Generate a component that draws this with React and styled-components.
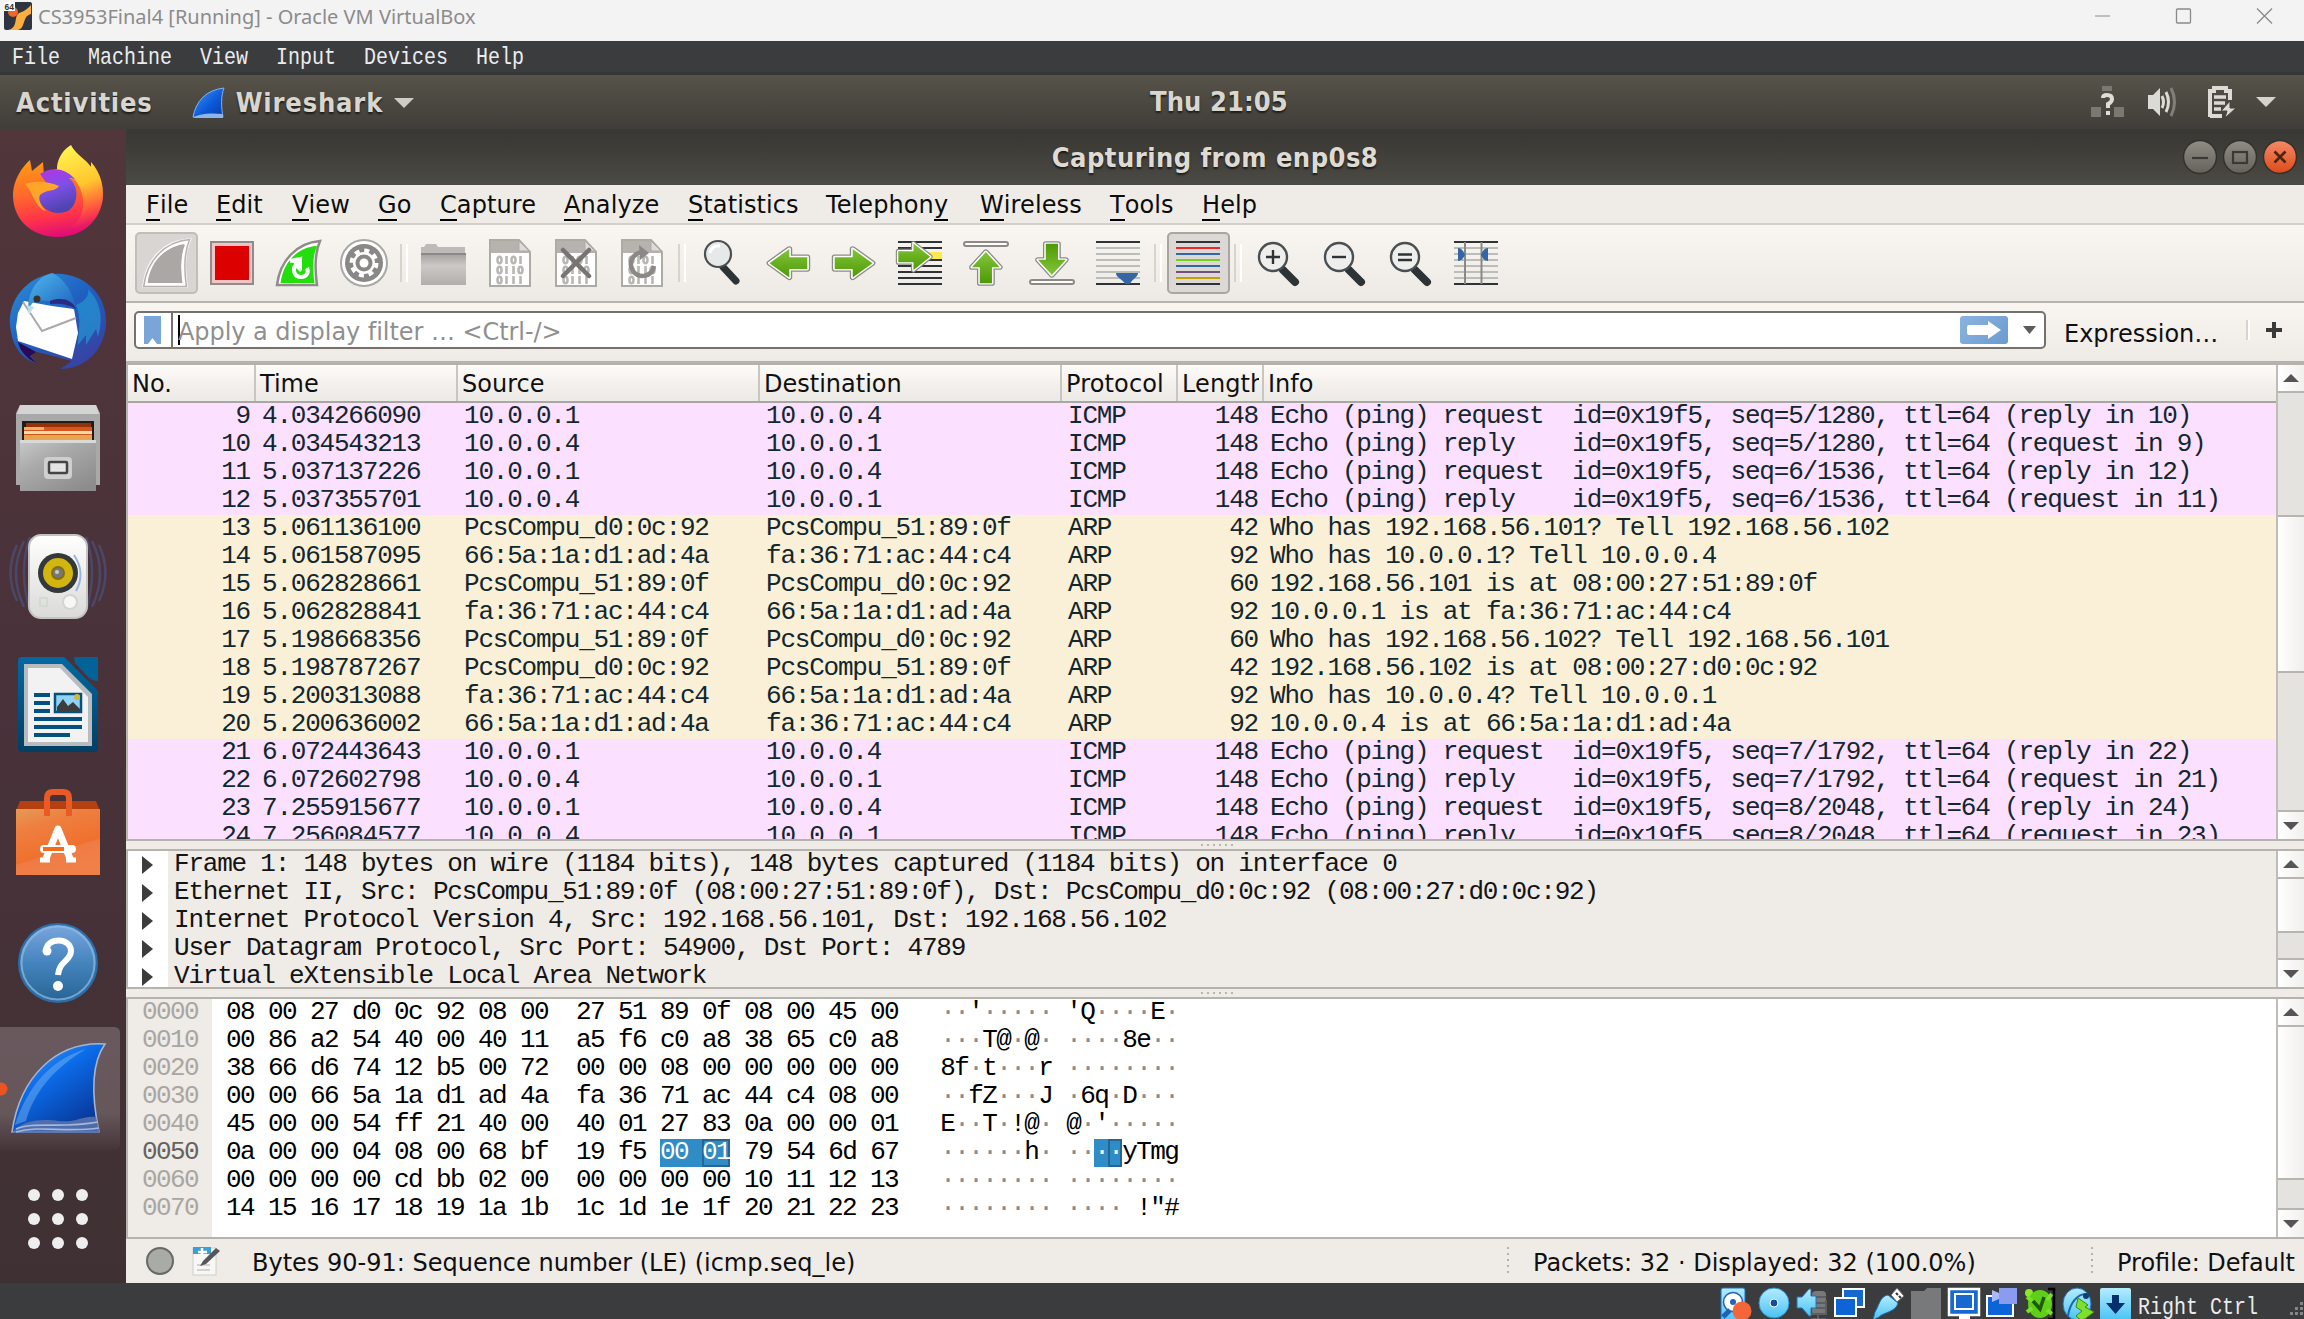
import React from 'react';
import styled, { createGlobalStyle, css } from 'styled-components';

const ui = '"DejaVu Sans", sans-serif';
const uiBold = '"DejaVu Sans Condensed", "DejaVu Sans", sans-serif';
const mono = '"Liberation Mono", monospace';

const Global = createGlobalStyle`
  * { box-sizing: border-box; }
  body { margin: 0; overflow: hidden; background: #3b3c3e; }
  svg { display: block; flex: none; overflow: visible; }
`;

/* ---------- host window ---------- */
const Host = styled.div`
  width: 2304px; height: 1319px; overflow: hidden;
  display: flex; flex-direction: column; font-family: ${ui};
`;
const HostTitle = styled.div`
  height: 41px; background: #f3f3f3; display: flex; align-items: center; padding: 0 32px 0 4px;
  font: 20px/30px "Noto Sans", sans-serif; color: #8b8b8b;
`;
const HostName = styled.span`flex: 1; margin: -7px 0 0 6px; white-space: pre;`;
const HostButtons = styled.div`display: flex; gap: 66px; margin-top: -9px;`;
const HostMenu = styled.div`
  height: 34px; background: #3b3c3e; border-bottom: 3px solid #353637;
  display: flex; gap: 28px; padding: 3px 0 0 12px; align-items: center;
`;
const Serif = styled.span`
  font: 20px/24px "Liberation Mono", monospace; color: #ececec; white-space: pre;
  transform: scaleY(1.22);
`;
const HostStatus = styled.div`
  height: 36px; flex: none; background: #3b3c3e; display: flex; justify-content: flex-end;
  align-items: flex-start; gap: 6px; padding: 5px 0 0;
`;
const KeyLabel = styled(Serif)`margin: 8px 26px 0 0;`;

/* ---------- guest desktop ---------- */
const TopBar = styled.div`
  height: 54px; flex: none; background: linear-gradient(#57534a, #403e39);
  display: grid; grid-template-columns: 1150px 1fr auto; align-items: center;
  font: bold 27px/34px ${uiBold}; color: #d9d6cf; letter-spacing: 0.85px;
  text-shadow: 0 2px 2px rgba(0,0,0,.6); padding-right: 28px;
`;
const TopLeft = styled.div`display: flex; align-items: center; padding: 1px 0 0 16px;`;
const AppMenu = styled.div`display: flex; align-items: center; gap: 11px; margin-left: 39px;`;
const Clock = styled.div`letter-spacing: 0.1px; margin-top: -1px;`;
const Tray = styled.div`display: flex; align-items: center;`;
const TrayItem = styled.div`margin-left: ${p => p.$gap}px;`;
const Desktop = styled.div`height: 1154px; flex: none; display: flex; min-height: 0;`;
const Dock = styled.div`
  width: 126px; background: linear-gradient(#51363a, #4a323b 45%, #3f3133);
  display: flex; flex-direction: column; overflow: hidden;
`;
const DockCell = styled.div`height: 128px; flex: none;`;

/* ---------- application window ---------- */
const Win = styled.div`flex: 1; min-width: 0; display: flex; flex-direction: column; background: #efebe7;`;
const WinTitle = styled.div`
  height: 56px; flex: none; background: linear-gradient(#3a3834, #3c3b36 25%, #4c4a44);
  display: grid; grid-template-columns: 1fr auto 1fr; align-items: center;
  font: bold 27px/34px ${uiBold}; letter-spacing: 0.48px; color: #dfdbd2; text-shadow: 0 2px 2px rgba(0,0,0,.6);
`;
const WinTitleText = styled.span`grid-column: 2; margin-top: 1px;`;
const WinButtons = styled.div`display: flex; gap: 6px; justify-content: flex-end; padding-right: 7px;`;
const MenuBar = styled.div`
  height: 40px; flex: none; border-bottom: 2px solid #d3cfca; background: #efece7;
  display: flex; padding-left: 18px; font: 24px/40px ${ui}; color: #0c0c0c;
`;
const MenuItem = styled.span`width: ${p => p.$w}px; white-space: pre; padding-left: 2px; letter-spacing: 0.1px;`;
const Mn = styled.span`border-bottom: 2px solid #000; padding-bottom: 0; display: inline-block; line-height: 28px;`;
const ToolBar = styled.div`
  height: 78px; flex: none; display: flex; align-items: center; padding-left: 7px;
  background: linear-gradient(#f9f6f2, #edeae5); border-bottom: 2px solid #b6b2ad;
`;
const ToolButton = styled.div`width: 66px; height: 62px; display: flex; align-items: center; justify-content: center;`;
const Pressed = styled.div`
  width: 63px; height: 62px; display: flex; align-items: center; justify-content: center;
  background: ${p => p.$strong ? '#dcd8d5' : '#d9d5d2'}; border: 2px solid ${p => p.$strong ? '#aaa5a1' : '#c1bdb9'}; border-radius: 5px;
`;
const ToolSep = styled.div`width: 14px; height: 38px; display: flex; justify-content: center;
  &::before { content: ''; width: 4px; border-left: 2px solid #d7d3ce; border-right: 2px solid #fff; }`;
const FilterBar = styled.div`
  height: 62px; flex: none; display: flex; align-items: center; padding: 0 20px 4px 8px;
  background: linear-gradient(#f9f5f1, #eeeae6); border-bottom: 4px solid #b5b1ac; font: 24px/30px ${ui}; color: #101010;
`;
const FilterInput = styled.div`
  width: 1912px; height: 38px; border: 2px solid #76716d; border-radius: 5px; background: #fff;
  display: flex; align-items: center; padding-right: 8px; color: #8f8f8f;
`;
const Bookmark = styled.div`width: 37px; height: 34px; border-right: 2px solid #76716d; padding: 3px 0 0 8px;`;
const Caret = styled.div`width: 2px; height: 30px; background: #000; margin-left: 5px;`;
const Placeholder = styled.span`flex: 1; white-space: pre; letter-spacing: -0.05px; margin: 4px 0 0 -2px;`;
const Apply = styled.div`width: 48px; height: 28px; border-radius: 3px; background: linear-gradient(135deg, #8bb3e0, #6c9bd0); margin-right: 15px;
  display: flex; align-items: center; justify-content: center;`;
const ExprLabel = styled.span`margin: 7px 0 0 18px; width: 182px;`;
const ExprSep = styled.div`width: 4px; height: 20px; border-left: 2px solid #d7d3ce; border-right: 2px solid #fff; margin-right: 16px;`;

/* ---------- panes ---------- */
const Pane = styled.div`
  display: flex; height: ${p => p.$h}px; flex: none; overflow: hidden;
  border-left: 2px solid #b8b4b0; border-bottom: 2px solid #b6b2ae; ${p => p.$top && css`border-top: 2px solid #b6b2ae;`}
`;
const PaneBody = styled.div`flex: 1; min-width: 0; overflow: hidden; background: ${p => p.$bg || '#fff'};`;
const Splitter = styled.div`height: 8px; flex: none; background: #efebe7; display: flex; justify-content: center; gap: 4px; padding: 3px 0 0 4px;`;
const SplitDot = styled.div`width: 2px; height: 2px; background: #b9b5b0;`;

const cols = '128px 202px 302px 302px 116px 86px 1fr';
const Header = styled.div`
  display: grid; grid-template-columns: ${cols}; height: 38px; border-bottom: 2px solid #aaa6a2;
  background: linear-gradient(#fdfbf9, #f4f1ed 50%, #eceae6); font: 24px/39px ${ui}; color: #101010;
`;
const HeadCell = styled.div`border-right: 2px solid #c9c5c1; padding-left: 4px; overflow: hidden; white-space: nowrap; height: 36px; letter-spacing: ${p => p.$ls || 0}px;
  &:last-child { border-right: 0; }`;
const HeadClip = styled.div`overflow: hidden; width: 77px; letter-spacing: 0.1px;`;
const monoText = css`font: 26px/26px ${mono}; letter-spacing: -1.21px; white-space: pre;`;
const Row = styled.div`
  display: grid; grid-template-columns: ${cols}; height: 28px;
  background: ${p => p.$arp ? '#faf0d7' : '#fce0ff'}; color: #12272e; ${monoText}
`;
const Cell = styled.div`padding: 0 ${p => p.$right ? 6 : 5}px 0 ${p => p.$right ? 0 : 6}px; text-align: ${p => p.$right ? 'right' : 'left'};`;

const TreeRow = styled.div`display: flex; height: 28px; color: #141414; ${monoText} letter-spacing: -1.22px;`;
const TreeGutter = styled.div`width: 40px; background: #fff; display: flex; align-items: center; padding-left: 14px;`;
const TreeText = styled.span`padding-left: 6px;`;

const HexPane = styled.div`display: flex; height: 238px;`;
const Offsets = styled.div`width: 84px; background: #efebe7; padding-left: 14px; ${monoText} letter-spacing: -1.6px; color: #a9a6a2;`;
const Offset = styled.div`height: 28px; color: ${p => p.$on ? '#66635f' : 'inherit'};`;
const HexLines = styled.div`padding-left: 14px; color: #000; ${monoText} letter-spacing: -1.6px;`;
const HexLine = styled.div`height: 28px;`;
const Sel = styled.span`background: #308cc6; color: #fff; display: inline-block; height: 28px;`;
const SelCur = styled(Sel)`box-shadow: inset 0 0 0 2px #246691;`;
const Dot = styled.span`color: #8c8c8c;`;

/* ---------- scroll bars ---------- */
const Scroll = styled.div`width: 28px; border-left: 2px solid #c0bcb8; display: flex; flex-direction: column; background: #e4e3df;`;
const ScrollArrow = styled.div`
  height: ${p => p.$down ? 29 : 28}px; flex: none; background: linear-gradient(90deg, #fff, #f1f0ed); display: flex; align-items: center; justify-content: center;
  ${p => p.$down ? css`border-top: 2px solid #b8b5b1;` : css`border-bottom: 2px solid #b8b5b1;`}
`;
const Track = styled.div`height: ${p => p.$h}px; flex: none;`;
const Thumb = styled.div`height: ${p => p.$h}px; flex: none; background: linear-gradient(90deg, #fff, #f0efec); border-bottom: 2px solid #b8b5b1; ${p => p.$t && css`border-top: 2px solid #b8b5b1;`}`;

const Status = styled.div`height: 44px; flex: none; display: flex; align-items: center; padding-left: 20px; font: 24px/30px ${ui}; color: #101010; background: #efebe7;`;
const StatusText = styled.span`width: ${p => p.$w}px; margin: 3px 0 0 ${p => p.$ml}px; white-space: nowrap;`;
const StatusSep = styled.div`width: 2px; height: 28px; background: repeating-linear-gradient(#b5b1ac 0 2px, transparent 2px 6px);`;

/* ---------- drawings ---------- */
const Tri = ({ dir = 'down', w = 16, h = 8, c = '#555' }) => (
  <svg width={w} height={h} viewBox="0 0 10 10" preserveAspectRatio="none">
    <path fill={c} d={dir === 'down' ? 'M0 0H10L5 10Z' : dir === 'up' ? 'M0 10H10L5 0Z' : 'M0 0L10 5L0 10Z'} />
  </svg>
);
const FinMini = () => (
  <svg width="33" height="32" viewBox="0 0 33 32">
    <defs><linearGradient id="fm" x2="1" y2="1"><stop offset="0" stopColor="#3b97ff" /><stop offset=".6" stopColor="#0b56d6" /><stop offset="1" stopColor="#0a3ba6" /></linearGradient></defs>
    <path d="M1 30C4 14 14 3 32 1C29 8 29 20 31 30Z" fill="url(#fm)" stroke="#7fb4f0" strokeWidth="1" />
    <path d="M1 31C8 26 20 26 31 27V31Z" fill="#8db4ec" />
  </svg>
);

const dockIcons = {
  firefox: <>
    <defs>
      <linearGradient id="ff1" x1=".3" y1="0" x2=".5" y2="1"><stop offset="0" stopColor="#ff9a12" /><stop offset=".4" stopColor="#ff6a2c" /><stop offset=".72" stopColor="#ff3647" /><stop offset="1" stopColor="#e00b78" /></linearGradient>
      <linearGradient id="ff2" x1=".3" y1="0" x2=".5" y2="1"><stop offset="0" stopColor="#fff44f" /><stop offset=".5" stopColor="#ffc62e" /><stop offset="1" stopColor="#ff7139" stopOpacity="0" /></linearGradient>
      <linearGradient id="ff3" x2=".3" y2="1"><stop offset="0" stopColor="#b833e1" /><stop offset=".5" stopColor="#7f4fe8" /><stop offset="1" stopColor="#5044b0" /></linearGradient>
    </defs>
    <path d="M30 31L32 42L43 33L44 46C52 40 62 38 76 38C86 34 92 36 96 42C100 46 103 54 103 68C101 92 82 108 58 108C31 108 12 90 13 64C14 50 22 38 30 31Z" fill="url(#ff1)" />
    <path d="M71 16C76 26 86 30 91 38L91 33C101 44 105 60 102 74C98 92 84 100 70 98C90 88 84 60 74 50C64 50 56 46 57 38C58 28 64 20 71 16Z" fill="url(#ff2)" />
    <path d="M40 45C50 38 64 38 75 50L69 49C80 58 78 76 68 82C56 87 42 82 39 70C38 64 42 58 48 56Z" fill="url(#ff3)" />
    <path d="M25 55C36 51 50 53 59 57C56 63 46 60 40 66C38 70 40 76 46 82C34 78 34 64 25 55Z" fill="#ffa62a" />
  </>,
  thunderbird: <>
    <defs>
      <linearGradient id="tb1" x2=".8" y2="1"><stop offset="0" stopColor="#2d8fd8" /><stop offset=".5" stopColor="#1f5fc0" /><stop offset="1" stopColor="#3a3fa0" /></linearGradient>
      <linearGradient id="tb2" x2="1" y2="1"><stop offset="0" stopColor="#4fb8ee" /><stop offset="1" stopColor="#1c5fbb" /></linearGradient>
    </defs>
    <path d="M52 17C26 20 8 44 10 68C12 90 22 102 36 106L26 92L72 104C66 108 62 111 60 112C86 112 106 92 106 64C106 34 80 14 52 17Z" fill="url(#tb1)" />
    <path d="M18 56L24 44L52 49L74 52L78 76L72 102L18 84L16 70Z" fill="#fff" />
    <path d="M23 45L42 74L76 61" fill="none" stroke="#a9a9a9" strokeWidth="2" />
    <path d="M18 85L36 95L30 99L36 106C26 101 20 94 18 85Z" fill="#2b0a55" />
    <path d="M52 16C36 20 28 36 28 52L34 44C50 42 66 46 76 54C74 34 62 20 52 16Z" fill="url(#tb2)" />
    <path d="M50 44C60 40 72 42 76 52C70 48 60 46 50 47Z" fill="#2a2a80" />
    <path d="M76 48C82 60 78 76 78 88L86 78L86 88L96 72L98 80C104 60 100 44 88 32C90 40 82 46 76 48Z" fill="#2596d2" opacity=".7" />
    <circle cx="37" cy="42" r="3.5" fill="#3d3324" /><path d="M27 48L34 50L29 58Z" fill="#b9e2ee" />
  </>,
  files: <>
    <defs><linearGradient id="fl" x2=".8" y2="1"><stop offset="0" stopColor="#c9c9c9" /><stop offset=".4" stopColor="#aaa" /><stop offset="1" stopColor="#8c8c8c" /></linearGradient></defs>
    <path d="M20 20H96L100 28V100H16V28Z" fill="#a9a9a9" /><path d="M20 20H96L99 29H17Z" fill="#d4d4d4" />
    <rect x="22" y="36" width="72" height="20" fill="#1f1c19" /><rect x="26" y="38" width="65" height="5" fill="#94330a" />
    <rect x="24" y="42" width="68" height="14" fill="#d8571d" /><rect x="24" y="42" width="20" height="3" fill="#eeb070" /><rect x="24" y="46" width="68" height="3" fill="#f9dda8" /><rect x="24" y="50" width="68" height="6" fill="#e9a550" />
    <path d="M20 55H96V106H20Z" fill="url(#fl)" /><rect x="20" y="55" width="76" height="3" fill="#d9d9d9" />
    <rect x="44" y="72" width="28" height="22" rx="4" fill="#cfcfcf" /><rect x="49" y="77" width="18" height="11" rx="1" fill="#e4e4e4" stroke="#444" strokeWidth="2.5" />
  </>,
  rhythmbox: <>
    <defs><linearGradient id="rb" x2="0" y2="1"><stop offset="0" stopColor="#fff" /><stop offset="1" stopColor="#dadad8" /></linearGradient></defs>
    <g fill="none" stroke="#4b5d94" strokeWidth="2.5" opacity=".5"><path d="M24 28Q8 60 24 94M17 32Q4 60 17 88M30 24Q18 58 30 98M92 28Q108 60 92 94M99 32Q112 60 99 88M86 24Q98 58 86 98" /></g>
    <rect x="29" y="22" width="58" height="83" rx="12" fill="url(#rb)" stroke="#c3c3bf" strokeWidth="2" />
    <circle cx="58" cy="60" r="20" fill="#33383a" /><circle cx="58" cy="60" r="15" fill="#d2b50e" /><circle cx="58" cy="60" r="7" fill="#836f0d" /><circle cx="58" cy="60" r="5" fill="#777" /><circle cx="57" cy="59" r="2" fill="#ccc" />
    <circle cx="70" cy="89" r="7" fill="#f7f7f5" stroke="#d4d4d0" strokeWidth="2" /><rect x="40" y="85" width="7" height="8" fill="none" stroke="#d3dacf" strokeWidth="2" />
    <path d="M74 42Q86 60 76 78" fill="none" stroke="#98b6dd" strokeWidth="2" />
  </>,
  writer: <>
    <defs><linearGradient id="wr" x2="0" y2="1"><stop offset="0" stopColor="#0369a3" /><stop offset="1" stopColor="#023f63" /></linearGradient></defs>
    <path d="M22 16H64L98 50V107Q98 111 94 111H22Q18 111 18 107V20Q18 16 22 16Z" fill="url(#wr)" />
    <path d="M74 16H98V40Q92 40 88 36L75 22Z" fill="#036297" />
    <path d="M24 23H62L92 53V105H24Z" fill="#b9bcbe" /><path d="M28 27H60L88 56V101H28Z" fill="#f2f2f2" />
    <path d="M34 54H50M34 62H50M34 70H50M34 78H82M34 86H82M34 94H70" stroke="#02517e" strokeWidth="4" />
    <rect x="55" y="53" width="26" height="18" fill="#8fd3f7" stroke="#02517e" strokeWidth="2.5" /><path d="M57 70V66L63 58L68 65L73 61L80 68V70Z" fill="#3d3d3d" /><circle cx="77" cy="56" r="3" fill="#d1b640" />
  </>,
  software: <>
    <defs><linearGradient id="sw" x2=".4" y2="1"><stop offset="0" stopColor="#e59a56" /><stop offset=".3" stopColor="#ee7f40" /><stop offset=".72" stopColor="#f0702e" /><stop offset=".74" stopColor="#ef7b43" /><stop offset="1" stopColor="#f08048" /></linearGradient></defs>
    <path d="M20 32H96L100 42H16Z" fill="#b5400f" /><rect x="16" y="40" width="84" height="66" fill="url(#sw)" />
    <path d="M47 47V29Q47 23 53 23H63Q69 23 69 29V47" fill="none" stroke="#ea5a24" strokeWidth="6" />
    <path d="M45 92L58 60L71 92" fill="none" stroke="#fff" strokeWidth="7" strokeLinejoin="round" />
    <path d="M40 91H50M66 91H76" stroke="#fff" strokeWidth="5" />
    <rect x="40" y="76" width="36" height="8" rx="4" fill="#fff" /><rect x="43" y="78" width="21" height="4" fill="#f56b17" />
  </>,
  help: <>
    <defs><linearGradient id="hp" x2="0" y2="1"><stop offset="0" stopColor="#7ba6de" /><stop offset=".5" stopColor="#4484bd" /><stop offset="1" stopColor="#276494" /></linearGradient></defs>
    <circle cx="58" cy="66" r="39" fill="url(#hp)" stroke="#2d6ca5" strokeWidth="2" /><circle cx="58" cy="66" r="36.5" fill="none" stroke="#8fbce6" strokeWidth="2" opacity=".7" />
    <path d="M46 54C46 40 71 40 71 54C71 64 59 64 58 78" fill="none" stroke="#fff" strokeWidth="6" /><circle cx="47" cy="54" r="4.5" fill="#fff" /><circle cx="58" cy="89" r="5" fill="#fff" />
  </>,
  wireshark: <>
    <defs>
      <linearGradient id="ws" x1=".1" x2=".8" y2="1"><stop offset="0" stopColor="#3f9bff" /><stop offset=".4" stopColor="#0b6be8" /><stop offset="1" stopColor="#07318f" /></linearGradient>
      <linearGradient id="wb" x2="0" y2="1"><stop offset="0" stopColor="#69595e" /><stop offset=".7" stopColor="#66575b" /><stop offset="1" stopColor="#463538" /></linearGradient>
    </defs>
    <path d="M0 2H114Q120 2 120 8V119Q120 125 114 125H0Z" fill="url(#wb)" />
    <circle cx="1" cy="64" r="6.5" fill="#e95420" />
    <path d="M12 107C20 52 56 16 105 19C93 36 90 64 99 107Z" fill="url(#ws)" stroke="#a8b4cc" strokeWidth="1.6" />
    <path d="M15 100C28 60 52 34 86 24C56 42 34 66 26 96Z" fill="#7db8f7" opacity=".45" />
    <path d="M12 108C22 94 44 94 58 96C76 98 84 90 96 92L100 108Z" fill="#5672ae" opacity=".9" /><path d="M16 104C34 96 60 104 98 97M16 107C40 100 66 108 99 103" fill="none" stroke="#a5b8d8" strokeWidth="1.6" />
  </>,
  apps: <g fill="#eee">{[42, 66, 90].map(y => [34, 58, 82].map(x => <circle key={x + '-' + y} cx={x} cy={y} r="6" />))}</g>,
};

const finD = 'M3 46C6 22 22 4 46 2C40 16 41 32 43 46Z';
const Doc = ({ children }) => <>
  <path d="M4 1H33L44 13V47H4Z" fill="#fff" stroke="#aeaba7" strokeWidth="2" /><path d="M5 2H33V12H43V14H5Z" fill="#b6b3af" /><path d="M33 2V12H43Z" fill="#dedbd8" stroke="#aeaba7" />
  <g fill="none" stroke="#b9b7b4" strokeWidth="2.6">
    <ellipse cx="13.500" cy="21" rx="2" ry="3.200" /><path d="M20.500 17V25M34.500 17V25" /><ellipse cx="27.500" cy="21" rx="2" ry="3.200" />
    <ellipse cx="13.500" cy="31" rx="2" ry="3.200" /><path d="M20.500 27V35M27.500 27V35" /><ellipse cx="34.500" cy="31" rx="2" ry="3.200" />
    <ellipse cx="13.500" cy="41" rx="2" ry="3.200" /><path d="M20.500 37V45M27.500 37V45M34.500 37V45" />
  </g>
  {children}
</>;
const arrowR = 'M3 17H23V7L45 24L23 41V31H3Z';
const Lens = ({ children }) => <>
  <path d="M29 31L41 43" stroke="#2e3436" strokeWidth="8" strokeLinecap="round" /><circle cx="19" cy="18" r="14" fill="#eeeeec" stroke="#4a5052" strokeWidth="2.4" />
  <g stroke="#2e3436" strokeWidth="2.4">{children}</g>
</>;
const Lines = ({ colors, x1 = 2, x2 = 46 }) => colors.map((c, i) => <path key={i} d={`M${x1} ${3 + i * 6}H${x2}`} stroke={c} strokeWidth="2.2" />);
const G = 'url(#grn)';
const Outlined = ({ d, t }) => <g transform={t} strokeLinejoin="round"><path d={d} fill="#fff" stroke="#8c8a87" strokeWidth="6.5" /><path d={d} fill="#fff" stroke="#fff" strokeWidth="3.500" /><path d={d} fill={G} /></g>;
const up = 'M17 44V24H8L24 5L40 24H31V44Z';

const toolIcons = {
  start: <><path d={finD} fill="#aaa7a4" stroke="#fff" strokeWidth="5" /><path d={finD} fill="none" stroke="#b5b1ae" strokeWidth="1.4" transform="translate(-1.6 -1.6) scale(1.07)" /><path d={finD} fill="#aaa7a4" transform="translate(3 4) scale(.87)" /></>,
  stop: <><rect x="3" y="3" width="42" height="42" fill="#f4c3c5" stroke="#8f8c8a" strokeWidth="2" /><rect x="7" y="7" width="34" height="34" fill="#dd0000" /></>,
  restart: <><path d={finD} fill="#fff" stroke="#8f8c8a" strokeWidth="2.5" /><path d={finD} fill="#24dd0c" transform="translate(4 5) scale(.85)" /><path d="M16 22L26 20L25 29L22 26C18 30 20 38 27 38C33 38 35 33 33 29" fill="none" stroke="#fff" strokeWidth="4" /><path d="M15 20H28V32Z" fill="#fff" /></>,
  options: <><circle cx="24" cy="24" r="23" fill="#fff" stroke="#aaa8a5" strokeWidth="2" /><circle cx="24" cy="24" r="19" fill="#8a8886" /><circle cx="24" cy="24" r="11" fill="#fff" /><circle cx="24" cy="24" r="12.5" fill="none" stroke="#fff" strokeWidth="4" strokeDasharray="5 4.8" /><circle cx="24" cy="24" r="8.500" fill="#8a8886" /><circle cx="24" cy="24" r="4.5" fill="#fff" /></>,
  open: <><path d="M1 12V8H4L6 5H16L18 8H45V46H1Z" fill="#bdbab7" /><path d="M1 14H46V46H1Z" fill="url(#fold)" /><path d="M1 15H46" stroke="#8b8885" strokeWidth="2" /></>,
  save: <Doc />,
  close: <Doc><path d="M11 11L37 37M37 11L11 37" stroke="#777472" strokeWidth="4.5" strokeLinecap="round" /></Doc>,
  reload: <Doc><path d="M24 13C14 15 10 24 15 32C21 40 34 38 36 27" fill="none" stroke="#8b8886" strokeWidth="4.5" /><path d="M21 6L31 14L22 21Z" fill="#8b8886" /></Doc>,
  find: <g transform="translate(2 0)"><path d="M23 28L36 42" stroke="#2e3436" strokeWidth="7" strokeLinecap="round" /><circle cx="18" cy="15" r="13" fill="#e7e9e8" stroke="#4a5052" strokeWidth="2.2" /><path d="M10 14C11 9 15 6 20 7" fill="none" stroke="#fff" strokeWidth="3" /></g>,
  back: <Outlined d={arrowR} t="translate(46 4) scale(-.9 .84)" />,
  forward: <Outlined d={arrowR} t="translate(2 4) scale(.9 .84)" />,
  goto: <><Lines colors={['#2e3436', '#2e3436', '#2e3436', '#2e3436', '#2e3436', '#2e3436', '#2e3436', '#2e3436']} /><rect x="32" y="13" width="14" height="7" fill="#fce94f" /><Outlined d={arrowR} t="translate(0 -1) scale(.76 .78)" /></>,
  first: <><rect x="2" y="3" width="44" height="4" rx="2" fill="#fff" stroke="#8c8a87" strokeWidth="2" /><Outlined d={up} t="translate(3 9) scale(.87 .8)" /></>,
  last: <><rect x="2" y="41" width="44" height="4" rx="2" fill="#fff" stroke="#8c8a87" strokeWidth="2" /><Outlined d={up} t="translate(3 40) scale(.87 -.8)" /></>,
  autoscroll: <><Lines colors={['#2e3436', '#bbbdb9', '#bbbdb9', '#bbbdb9', '#bbbdb9', '#bbbdb9', '#bbbdb9', '#2e3436']} /><path d="M22 34H44C44 38 38 40 36 45H31C29 40 22 39 22 34Z" fill="#3465a4" /></>,
  color: <Lines colors={['#2e3436', '#ef2929', '#3465a4', '#73d216', '#3465a4', '#75507b', '#c4a000', '#2e3436']} />,
  zin: <Lens><path d="M12 18H26M19 11V25" /></Lens>,
  zout: <Lens><path d="M12 18H26" /></Lens>,
  zone: <Lens><path d="M12 15.5H26M12 21H26" /></Lens>,
  columns: <><Lines colors={['#2e3436', '#bbbdb9', '#bbbdb9', '#bbbdb9', '#bbbdb9', '#bbbdb9', '#bbbdb9', '#2e3436']} /><path d="M13 3V45M29.500 3V45" stroke="#888a85" strokeWidth="2" /><path d="M6 9C10 9 12 13 13 16C12 18 10 22 6 22ZM36 9C32 9 30 13 29 16C30 18 32 22 36 22Z" fill="#3465a4" /></>,
};

const tools = [
  { i: 'start', pressed: 1 }, { i: 'stop' }, { i: 'restart' }, { i: 'options' }, null,
  { i: 'open' }, { i: 'save' }, { i: 'close' }, { i: 'reload' }, null,
  { i: 'find' }, { i: 'back' }, { i: 'forward' }, { i: 'goto' }, { i: 'first' }, { i: 'last' }, { i: 'autoscroll' }, null,
  { i: 'color', pressed: 2 }, null, { i: 'zin' }, { i: 'zout' }, { i: 'zone' }, { i: 'columns' },
];
const ToolIcon = ({ name }) => <svg width="48" height="48" viewBox="0 0 48 48">{toolIcons[name]}</svg>;

const trayBlue = 'url(#vb)';
const hostIcons = [
  <><rect x="1" y="0" width="24" height="34" rx="2" fill={trayBlue} stroke="#1d6fc0" /><circle cx="13" cy="14" r="9.500" fill="#fff" stroke="#1e62b5" strokeWidth="1.500" /><circle cx="13" cy="14" r="3" fill="#2065b8" /><path d="M3 29L10 22" stroke="#1e62b5" strokeWidth="5" /><circle cx="22" cy="23" r="9.500" fill="#f4663a" /></>,
  <><circle cx="16" cy="15" r="15" fill={trayBlue} stroke="#2a8fd0" /><circle cx="16" cy="15" r="4" fill="#10509c" stroke="#fff" /></>,
  <><rect x="16" y="3" width="14" height="24" rx="4" fill="#77797b" /><path d="M14 14V26H30V12M22 26V31M15 31H30M20 9H30M20 15H30M20 20H30" stroke="#5c5e60" strokeWidth="2" fill="none" /><path d="M1 9H6L13 1H15V8H20V20H15V28H13L6 20H1Z" fill={trayBlue} stroke="#2372b5" /></>,
  <><rect x="9" y="1" width="21" height="18" fill="#1468cf" stroke="#fff" strokeWidth="2" /><rect x="1" y="10" width="21" height="18" fill="#0d64d6" stroke="#fff" strokeWidth="2" /></>,
  <><path d="M19 7L25 0L32 8L25 14Z" fill="#fff" stroke="#666" /><path d="M16 7L26 15C24 24 12 24 7 29L1 32L3 24C7 18 8 8 16 7Z" fill={trayBlue} stroke="#1d6fb5" /><path d="M24 5L26 7M27 8L29 10" stroke="#333" strokeWidth="2" /></>,
  <path d="M1 3H14L17 0H31V32H1Z" fill="#77797a" />,
  <><rect x="1" y="1" width="30" height="26" fill="#1769cf" stroke="#fff" strokeWidth="2.500" /><rect x="7" y="6" width="18" height="15" fill="#1769cf" stroke="#fff" strokeWidth="2" /><path d="M11 29H22" stroke="#fff" strokeWidth="4" /></>,
  <><rect x="1" y="8" width="26" height="20" fill="#0d64d6" stroke="#fff" strokeWidth="2" /><rect x="13" y="0" width="18" height="16" fill="#8b9cf0" /><path d="M6 2L13 5V11L6 14Z" fill="#a9b8ff" /></>,
  <><circle cx="5" cy="5" r="4" fill="#8be82d" /><ellipse cx="16" cy="16" rx="12" ry="14" fill="#5fd017" /><path d="M3 9L8 13M3 24L8 20M28 6L23 12M28 26L23 22" stroke="#7ae02a" strokeWidth="4" /><path d="M9 13L16 21L20 9" fill="none" stroke="#1e5a0a" strokeWidth="3.500" /><path d="M24 1H30V31H24" fill="none" stroke="#000" strokeWidth="2.500" /></>,
  <><ellipse cx="15" cy="16" rx="14" ry="16" fill={trayBlue} stroke="#2372b5" /><path d="M6 28C8 14 16 6 24 6" fill="none" stroke="#1a68b0" strokeWidth="2" /><circle cx="24" cy="8" r="3" fill="#0f4170" /><path d="M16 10L26 17L23 19L32 24L20 33L14 28L20 23L14 19Z" fill="#7fe02b" stroke="#3c8d10" /></>,
  <><rect x="0" y="0" width="31" height="32" rx="2" fill={trayBlue} /><path d="M12 7H19V15H25L15.500 26L6 15H12Z" fill="#03306d" /></>,
];

/* ---------- data ---------- */
const A = '10.0.0.1', B = '10.0.0.4', P1 = 'PcsCompu_d0:0c:92', P2 = 'PcsCompu_51:89:0f', M1 = '66:5a:1a:d1:ad:4a', M2 = 'fa:36:71:ac:44:c4';
const ping = (n, t, rep, seq, peer) => [n, t, rep ? B : A, rep ? A : B, 'ICMP', 148,
  `Echo (ping) ${rep ? 'reply  ' : 'request'}  id=0x19f5, seq=${seq}, ttl=64 (${rep ? 'request' : 'reply'} in ${peer})`];
const packets = [
  ping(9, '4.034266090', 0, '5/1280', 10), ping(10, '4.034543213', 1, '5/1280', 9),
  ping(11, '5.037137226', 0, '6/1536', 12), ping(12, '5.037355701', 1, '6/1536', 11),
  [13, '5.061136100', P1, P2, 'ARP', 42, 'Who has 192.168.56.101? Tell 192.168.56.102'],
  [14, '5.061587095', M1, M2, 'ARP', 92, 'Who has 10.0.0.1? Tell 10.0.0.4'],
  [15, '5.062828661', P2, P1, 'ARP', 60, '192.168.56.101 is at 08:00:27:51:89:0f'],
  [16, '5.062828841', M2, M1, 'ARP', 92, '10.0.0.1 is at fa:36:71:ac:44:c4'],
  [17, '5.198668356', P2, P1, 'ARP', 60, 'Who has 192.168.56.102? Tell 192.168.56.101'],
  [18, '5.198787267', P1, P2, 'ARP', 42, '192.168.56.102 is at 08:00:27:d0:0c:92'],
  [19, '5.200313088', M2, M1, 'ARP', 92, 'Who has 10.0.0.4? Tell 10.0.0.1'],
  [20, '5.200636002', M1, M2, 'ARP', 92, '10.0.0.4 is at 66:5a:1a:d1:ad:4a'],
  ping(21, '6.072443643', 0, '7/1792', 22), ping(22, '6.072602798', 1, '7/1792', 21),
  ping(23, '7.255915677', 0, '8/2048', 24), ping(24, '7.256084577', 1, '8/2048', 23),
];
const tree = [
  'Frame 1: 148 bytes on wire (1184 bits), 148 bytes captured (1184 bits) on interface 0',
  'Ethernet II, Src: PcsCompu_51:89:0f (08:00:27:51:89:0f), Dst: PcsCompu_d0:0c:92 (08:00:27:d0:0c:92)',
  'Internet Protocol Version 4, Src: 192.168.56.101, Dst: 192.168.56.102',
  'User Datagram Protocol, Src Port: 54900, Dst Port: 4789',
  'Virtual eXtensible Local Area Network',
];
const hex = [
  ['08 00 27 d0 0c 92 08 00  27 51 89 0f 08 00 45 00', "··'····· 'Q····E·"],
  ['00 86 a2 54 40 00 40 11  a5 f6 c0 a8 38 65 c0 a8', '···T@·@· ····8e··'],
  ['38 66 d6 74 12 b5 00 72  00 00 08 00 00 00 00 00', '8f·t···r ········'],
  ['00 00 66 5a 1a d1 ad 4a  fa 36 71 ac 44 c4 08 00', '··fZ···J ·6q·D···'],
  ['45 00 00 54 ff 21 40 00  40 01 27 83 0a 00 00 01', "E··T·!@· @·'·····"],
  ['0a 00 00 04 08 00 68 bf  19 f5 00 01 79 54 6d 67', '······h· ····yTmg'],
  ['00 00 00 00 cd bb 02 00  00 00 00 00 10 11 12 13', '········ ········'],
  ['14 15 16 17 18 19 1a 1b  1c 1d 1e 1f 20 21 22 23', '········ ···· !"#'],
];
const Ascii = ({ s }) => s.split(/(·+)/).map((t, i) => t[0] === '·' ? <Dot key={i}>{t}</Dot> : t);
const HexRow = ({ row, sel }) => sel
  ? <HexLine>{row[0].slice(0, 31)}<Sel>{row[0].slice(31, 34)}</Sel><SelCur>{row[0].slice(34, 36)}</SelCur>{row[0].slice(36)}{'   '}
    <Ascii s={row[1].slice(0, 11)} /><Sel>{row[1][11]}</Sel><SelCur>{row[1][12]}</SelCur>{row[1].slice(13)}</HexLine>
  : <HexLine>{row[0]}{'   '}<Ascii s={row[1]} /></HexLine>;

const menus = [['', 'F', 'ile', 70], ['', 'E', 'dit', 76], ['', 'V', 'iew', 86], ['', 'G', 'o', 62], ['', 'C', 'apture', 124], ['', 'A', 'nalyze', 124],
  ['', 'S', 'tatistics', 138], ['Telephon', 'y', '', 154], ['', 'W', 'ireless', 130], ['', 'T', 'ools', 92], ['', 'H', 'elp', 80]];
const Split = () => <Splitter>{[0, 1, 2, 3, 4, 5].map(i => <SplitDot key={i} />)}</Splitter>;
const ScrollBar = ({ before, thumb, after }) => (
  <Scroll><ScrollArrow><Tri dir="up" /></ScrollArrow>{before > 0 && <Track $h={before} />}<Thumb $h={thumb} $t={before > 0} /><Track $h={after} /><ScrollArrow $down><Tri /></ScrollArrow></Scroll>
);

export default function App() {
  return (
    <Host>
      <Global />
      <HostTitle>
        <svg width="28" height="28" viewBox="0 0 28 28" style={{ marginTop: -10 }}>
          <rect width="28" height="28" rx="2" fill="#2e3440" /><path d="M4 28C14 26 10 16 14 12C17 9 20 11 27 3V12C18 14 22 26 14 28Z" fill="#f9ae3d" /><circle cx="9" cy="10" r="5" fill="#f0662a" />
          <rect x="0" y="0" width="11" height="9" fill="#fff" /><text x="0.500" y="8" fontSize="8.500" fontWeight="bold" fontFamily="Liberation Sans" fill="#333">64</text>
        </svg>
        <HostName>CS3953Final4 [Running] - Oracle VM VirtualBox</HostName>
        <HostButtons>
          <svg width="15" height="16" viewBox="0 0 15 16"><path d="M0 8H15" stroke="#8a8a8a" /></svg>
          <svg width="15" height="16" viewBox="0 0 15 16"><rect x=".5" y="1" width="14" height="14" rx="1" fill="none" stroke="#8a8a8a" strokeWidth="1.300" /></svg>
          <svg width="15" height="16" viewBox="0 0 15 16"><path d="M0 0.500L15 15.500M15 0.500L0 15.500" stroke="#8a8a8a" strokeWidth="1.300" /></svg>
        </HostButtons>
      </HostTitle>
      <HostMenu>{['File', 'Machine', 'View', 'Input', 'Devices', 'Help'].map(m => <Serif key={m}>{m}</Serif>)}</HostMenu>

      <TopBar>
        <TopLeft>Activities<AppMenu><FinMini />Wireshark<Tri w={20} h={10} c="#cfccc5" /></AppMenu></TopLeft>
        <Clock>Thu 21:05</Clock>
        <Tray>
          <svg width="33" height="32" viewBox="0 0 33 32"><path d="M11 0H21V5H11ZM0 21H10V31H0ZM23 21H33V31H23Z" fill="#7b7872" /><path d="M12 12Q12 9 16 9Q21 9 21 13Q21 16 17 18V22" fill="none" stroke="#e0ddd8" strokeWidth="4" /><rect x="15" y="25" width="4" height="4" fill="#e0ddd8" /></svg>
          <TrayItem $gap={24}><svg width="30" height="30" viewBox="0 0 30 30"><path d="M0 8H5L12 1V29L5 22H0Z" fill="#dcdad5" /><path d="M14 9Q17 15 14 21M18 5Q23 15 18 25" fill="none" stroke="#dcdad5" strokeWidth="3" /><path d="M23 1Q30 15 23 29" fill="none" stroke="#827f79" strokeWidth="3" /></svg></TrayItem>
          <TrayItem $gap={30}><svg width="28" height="32" viewBox="0 0 28 32"><path d="M2 31V5H6V2H18V5H22V14M2 30H14" fill="none" stroke="#dcdad5" strokeWidth="4" /><path d="M6 11H18M6 17H17M6 23H13" stroke="#dcdad5" strokeWidth="3.500" /><path d="M22 15L13 25H19L17 32L28 22H22Z" fill="#dcdad5" stroke="#45433e" strokeWidth="1" /></svg></TrayItem>
          <TrayItem $gap={20}><Tri w={20} h={10} c="#d6d3cd" /></TrayItem>
        </Tray>
      </TopBar>

      <Desktop>
        <Dock>{Object.entries(dockIcons).map(([k, g]) => <DockCell key={k}><svg width="126" height="128" viewBox="0 0 126 128">{g}</svg></DockCell>)}</Dock>
        <Win>
          <WinTitle>
            <WinTitleText>Capturing from enp0s8</WinTitleText>
            <WinButtons>
              {['min', 'max', 'x'].map(k => (
                <svg key={k} width="34" height="34" viewBox="0 0 34 34">
                  <defs>
                    <linearGradient id={'b' + k} x2="0" y2="1"><stop offset="0" stopColor={k === 'x' ? '#f58a68' : '#8f8d84'} /><stop offset="1" stopColor={k === 'x' ? '#dd4a1a' : '#64625b'} /></linearGradient>
                    <linearGradient id="grn" x2="0" y2="1"><stop offset="0" stopColor="#82c53a" /><stop offset="1" stopColor="#4e9a06" /></linearGradient>
                    <linearGradient id="fold" x2="0" y2="1"><stop offset="0" stopColor="#a29f9c" /><stop offset=".4" stopColor="#cbc9c6" /><stop offset="1" stopColor="#b1aeab" /></linearGradient>
                    <linearGradient id="vb" x2="0" y2="1"><stop offset="0" stopColor="#b5ecff" /><stop offset="1" stopColor="#49c3f5" /></linearGradient>
                  </defs>
                  <circle cx="17" cy="17" r="16.500" fill={`url(#b${k})`} stroke="#32312d" strokeWidth="1.500" />
                  {k === 'min' && <path d="M9 18H25" stroke="#3a3934" strokeWidth="2.200" />}
                  {k === 'max' && <rect x="10" y="12" width="14" height="11" fill="none" stroke="#3a3934" strokeWidth="2.200" />}
                  {k === 'x' && <path d="M11.500 11.500L22.500 22.500M22.500 11.500L11.500 22.500" stroke="#4a2413" strokeWidth="2.600" />}
                </svg>
              ))}
            </WinButtons>
          </WinTitle>
          <MenuBar>{menus.map(([a, m, z, w]) => <MenuItem key={a + m + z} $w={w}>{a}<Mn>{m}</Mn>{z}</MenuItem>)}</MenuBar>
          <ToolBar>
            {tools.map((t, i) => t
              ? <ToolButton key={i}>{t.pressed ? <Pressed $strong={t.pressed === 2}><ToolIcon name={t.i} /></Pressed> : <ToolIcon name={t.i} />}</ToolButton>
              : <ToolSep key={i} />)}
          </ToolBar>
          <FilterBar>
            <FilterInput>
              <Bookmark><svg width="17" height="28" viewBox="0 0 17 28"><path d="M0 0H17V28L13 28L8.500 22L4 28H0Z" fill="#79a5d9" /></svg></Bookmark>
              <Caret /><Placeholder>Apply a display filter … &lt;Ctrl-/&gt;</Placeholder>
              <Apply><svg width="34" height="18" viewBox="0 0 34 18"><path d="M2 4H21V0L34 9L21 18V14H2Q0 14 0 12V6Q0 4 2 4Z" fill="#fff" /></svg></Apply>
              <Tri w={13} h={8} c="#5b5b5b" />
            </FilterInput>
            <ExprLabel>Expression…</ExprLabel><ExprSep />
            <svg width="16" height="16" viewBox="0 0 16 16"><path d="M8 0V16M0 8H16" stroke="#3a3a3a" strokeWidth="4" /></svg>
          </FilterBar>

          <Pane $h={476}>
            <PaneBody>
              <Header>
                <HeadCell>No.</HeadCell><HeadCell>Time</HeadCell><HeadCell>Source</HeadCell><HeadCell>Destination</HeadCell>
                <HeadCell $ls={0.15}>Protocol</HeadCell><HeadCell><HeadClip>Length</HeadClip></HeadCell><HeadCell>Info</HeadCell>
              </Header>
              {packets.map(p => (
                <Row key={p[0]} $arp={p[4] === 'ARP'}>{p.map((v, i) => <Cell key={i} $right={i === 0 || i === 5}>{v}</Cell>)}</Row>
              ))}
            </PaneBody>
            <ScrollBar before={122} thumb={158} after={137} />
          </Pane>
          <Split />
          <Pane $h={140} $top>
            <PaneBody $bg="#efebe7">{tree.map(t => <TreeRow key={t}><TreeGutter><Tri dir="right" w={11} h={18} c="#3c3c3c" /></TreeGutter><TreeText>{t}</TreeText></TreeRow>)}</PaneBody>
            <ScrollBar before={0} thumb={54} after={25} />
          </Pane>
          <Split />
          <Pane $h={242} $top>
            <PaneBody>
              <HexPane>
                <Offsets>{hex.map((_, i) => <Offset key={i} $on={i === 5}>{`00${i}0`}</Offset>)}</Offsets>
                <HexLines>{hex.map((r, i) => <HexRow key={i} row={r} sel={i === 5} />)}</HexLines>
              </HexPane>
            </PaneBody>
            <ScrollBar before={0} thumb={153} after={28} />
          </Pane>
          <Status>
            <svg width="28" height="28" viewBox="0 0 28 28"><circle cx="14" cy="14" r="13" fill="#a9aba7" stroke="#666965" strokeWidth="2" /></svg>
            <svg width="30" height="29" viewBox="0 0 30 29" style={{ marginLeft: 18 }}>
              <rect x="1" y="1" width="23" height="27" fill="#f7f7f5" stroke="#cfcfcb" /><rect x="1" y="0" width="18" height="7" fill="#3b9fd8" /><path d="M10 1V8M6 5H15" stroke="#fff" strokeWidth="2.500" />
              <path d="M5 18H18M5 23H18" stroke="#d3d3d0" strokeWidth="2" /><path d="M8 19L11 14L24 1L28 4L14 17Z" fill="#55575a" />
            </svg>
            <StatusText $w={1255} $ml={30}>Bytes 90-91: Sequence number (LE) (icmp.seq_le)</StatusText>
            <StatusSep /><StatusText $w={558} $ml={24}>Packets: 32 · Displayed: 32 (100.0%)</StatusText>
            <StatusSep /><StatusText $w={185} $ml={24}>Profile: Default</StatusText>
          </Status>
        </Win>
      </Desktop>

      <HostStatus>
        {hostIcons.map((g, i) => <svg key={i} width="32" height="32" viewBox="0 0 32 32">{g}</svg>)}
        <KeyLabel>Right Ctrl</KeyLabel>
        <svg width="14" height="16" viewBox="0 0 14 16" style={{ marginTop: 14 }}><path d="M10 0h3v3h-3zM5 5h3v3h-3zM10 5h3v3h-3zM0 10h3v3h-3zM5 10h3v3h-3zM10 10h3v3h-3z" fill="#858687" /></svg>
      </HostStatus>
    </Host>
  );
}
